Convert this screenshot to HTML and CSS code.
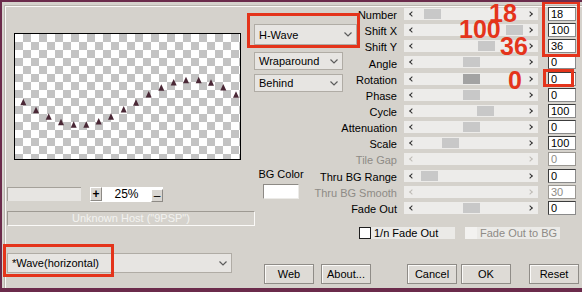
FILE: index.html
```html
<!DOCTYPE html>
<html lang="en">
<head>
    <meta charset="UTF-8">
    <meta name="viewport" content="width=device-width, initial-scale=1.0">
    <title>Wave</title>
    <link rel="stylesheet" href="styles.css">
</head>
<body>
<div class="window">
    <div class="panel">
        <div class="left">
            <div class="preview">
                <svg width="225" height="125" viewBox="0 0 225 125">
                    <defs>
                        <polygon id="tri" points="0,-4 3,2.5 -3,2.5"/>
                    </defs>
                    <g class="dots">
                        <use href="#tri" x="8.3" y="68.7"/>
                        <use href="#tri" x="21" y="76.7"/>
                        <use href="#tri" x="33.7" y="83.3"/>
                        <use href="#tri" x="46" y="88.7"/>
                        <use href="#tri" x="58.7" y="91.3"/>
                        <use href="#tri" x="71.3" y="91.3"/>
                        <use href="#tri" x="83.7" y="88"/>
                        <use href="#tri" x="96" y="83.3"/>
                        <use href="#tri" x="108.7" y="76"/>
                        <use href="#tri" x="121" y="69.3"/>
                        <use href="#tri" x="133.7" y="61"/>
                        <use href="#tri" x="146.3" y="54.3"/>
                        <use href="#tri" x="158.7" y="49"/>
                        <use href="#tri" x="171" y="46.7"/>
                        <use href="#tri" x="183.7" y="46.7"/>
                        <use href="#tri" x="196" y="49.3"/>
                        <use href="#tri" x="208.3" y="54"/>
                        <use href="#tri" x="221" y="61.3"/>
                    </g>
                </svg>
            </div>
            <div class="zoombar">
                <div class="field"></div>
                <div class="zoom">
                    <span class="zbtn">+</span>
                    <span class="zval">25%</span>
                    <span class="zbtn minus">&ndash;</span>
                </div>
            </div>
            <div class="host">Unknown Host ("9PSP")</div>
            <div class="combo wave mark">
                <span>*Wave(horizontal)</span>
                <svg class="chev" width="8" height="5" viewBox="0 0 8 5"><polyline points="0.5,0.5 4,4 7.5,0.5"/></svg>
            </div>
        </div>

        <div class="right">
            <div class="top">
                <div class="side">
                    <div class="combo hwave mark">
                        <span>H-Wave</span>
                        <svg class="chev" width="8" height="5" viewBox="0 0 8 5"><polyline points="0.5,0.5 4,4 7.5,0.5"/></svg>
                    </div>
                    <div class="combo small">
                        <span>Wraparound</span>
                        <svg class="chev" width="8" height="5" viewBox="0 0 8 5"><polyline points="0.5,0.5 4,4 7.5,0.5"/></svg>
                    </div>
                    <div class="combo small">
                        <span>Behind</span>
                        <svg class="chev" width="8" height="5" viewBox="0 0 8 5"><polyline points="0.5,0.5 4,4 7.5,0.5"/></svg>
                    </div>
                    <div class="bgcolor">
                        <span>BG Color</span>
                        <div class="swatch"></div>
                    </div>
                </div>

                <div class="params">
                    <div class="name">Number</div>
                    <div class="bar"><i class="thumb" style="left:20px"></i></div>
                    <div class="val">18</div>

                    <div class="name">Shift X</div>
                    <div class="bar"><i class="thumb" style="left:102px"></i></div>
                    <div class="val">100</div>

                    <div class="name">Shift Y</div>
                    <div class="bar"><i class="thumb" style="left:74px"></i></div>
                    <div class="val">36</div>

                    <div class="name">Angle</div>
                    <div class="bar"><i class="thumb" style="left:59px"></i></div>
                    <div class="val">0</div>

                    <div class="name">Rotation</div>
                    <div class="bar"><i class="thumb focus" style="left:59px"></i></div>
                    <div class="val">0</div>

                    <div class="name">Phase</div>
                    <div class="bar"><i class="thumb" style="left:59px"></i></div>
                    <div class="val">0</div>

                    <div class="name">Cycle</div>
                    <div class="bar"><i class="thumb" style="left:73px"></i></div>
                    <div class="val">100</div>

                    <div class="name">Attenuation</div>
                    <div class="bar"><i class="thumb" style="left:59px"></i></div>
                    <div class="val">0</div>

                    <div class="name">Scale</div>
                    <div class="bar"><i class="thumb" style="left:38px"></i></div>
                    <div class="val">100</div>

                    <div class="name off">Tile Gap</div>
                    <div class="bar off"></div>
                    <div class="val off">0</div>

                    <div class="name">Thru BG Range</div>
                    <div class="bar"><i class="thumb" style="left:17px"></i></div>
                    <div class="val">0</div>

                    <div class="name off">Thru BG Smooth</div>
                    <div class="bar off"></div>
                    <div class="val off">30</div>

                    <div class="name">Fade Out</div>
                    <div class="bar"><i class="thumb" style="left:59px"></i></div>
                    <div class="val">0</div>
                </div>
            </div>

            <div class="checks">
                <div class="check">
                    <span class="tick"></span>
                    <span class="text">1/n Fade Out</span>
                </div>
                <div class="check off">
                    <span class="tick"></span>
                    <span class="text">Fade Out to BG</span>
                </div>
            </div>

            <div class="buttons">
                <button class="btn">Web</button>
                <button class="btn about">About...</button>
                <button class="btn cancel">Cancel</button>
                <button class="btn ok">OK</button>
                <button class="btn reset">Reset</button>
            </div>
        </div>
    </div>

    <!-- red annotations drawn over the dialog -->
    <div class="redbox inputs"></div>
    <div class="redbox rot"></div>
    <span class="note n18">18</span>
    <span class="note n100">100</span>
    <span class="note n36">36</span>
    <span class="note n0">0</span>
</div>
</body>
</html>
```

FILE: styles.css
```css
body{
    margin: 0;
    background: #d5d2cc;
    font-family: "Liberation Sans", Arial, sans-serif;
    font-size: 11px;
    color: #000;
}
.window{
    position: relative;
    width: 582px;
    height: 292px;
    box-sizing: border-box;
    border-top: 2px solid #6b2b4b;
    border-left: 2px solid #6b2b4b;
    border-bottom: 4px solid #6b2b4b;
    overflow: hidden;
}
.panel{
    display: flex;
    box-sizing: border-box;
    height: 283px;
    margin: 3px 0 0 2px;
    padding: 1px 0 0 2px;
    border-top: 1px solid #b9b5ae;
    border-left: 1px solid #b9b5ae;
    box-shadow: inset 1px 1px #fbfaf8;
}

/* left side */
.left{
    width: 247px;
    display: flex;
    flex-direction: column;
    align-items: flex-start;
}
.preview{
    margin: 26px 0 0 7px;
    width: 227px;
    height: 127px;
    box-sizing: border-box;
    border: 1px solid #000;
    background: repeating-conic-gradient(#c3c3c3 0 25%, #fff 0 50%) 0 0 / 16px 16px;
}
.preview svg{
    display: block;
}
.dots{
    fill: #4a2836;
}
.zoombar{
    display: flex;
    gap: 9px;
    margin-top: 27px;
}
.field{
    width: 74px;
    height: 14px;
    box-sizing: border-box;
    border-top: 1px solid #a5a19a;
    border-left: 1px solid #a5a19a;
    background: #e7e5e2;
}
.zoom{
    display: flex;
    align-items: flex-start;
    width: 73px;
    height: 15px;
    background: #fff;
}
.zbtn{
    width: 12px;
    height: 14px;
    box-sizing: border-box;
    border: 1px solid #fff;
    border-right-color: #8d8a85;
    border-bottom-color: #8d8a85;
    background: #d9d6d1;
    display: flex;
    align-items: center;
    justify-content: center;
    font-weight: bold;
    font-size: 12px;
    line-height: 1;
}
.zbtn.minus{
    margin-top: 2px;
    height: 13px;
    font-weight: normal;
}
.zval{
    flex: 1;
    text-align: center;
    line-height: 14px;
    font-size: 12px;
}
.host{
    margin-top: 9px;
    width: 248px;
    height: 15px;
    box-sizing: border-box;
    border-top: 1px solid #9e9a93;
    border-left: 1px solid #9e9a93;
    border-bottom: 1px solid #fbfaf8;
    border-right: 1px solid #fbfaf8;
    color: #f3f2f0;
    text-align: center;
    line-height: 13px;
}

/* combos */
.combo{
    position: relative;
    display: flex;
    align-items: center;
    justify-content: space-between;
    box-sizing: border-box;
    padding: 0 4px;
    border: 1px solid #b0aca5;
    background: #e7e5e2;
}
.chev{
    fill: none;
    stroke: #5c5c5c;
    stroke-width: 1.2;
}
.wave{
    margin-top: 27px;
    width: 225px;
    height: 20px;
    padding-left: 4px;
}
.hwave{
    margin-top: 17px;
    width: 103px;
    height: 21px;
}
.small{
    width: 89px;
    height: 18px;
    margin-top: 4px;
}
.hwave + .small{
    margin-top: 7px;
}
.mark::after{
    content: "";
    position: absolute;
    box-sizing: border-box;
    border: 3px solid #e4341b;
}
.hwave::after{
    top: -12px;
    left: -8px;
    right: -4px;
    bottom: -4px;
}
.wave::after{
    top: -10px;
    left: -5px;
    width: 111px;
    bottom: -5px;
}

/* right side */
.right{
    display: flex;
    flex-direction: column;
}
.top{
    display: flex;
    align-items: flex-start;
}
.side{
    width: 103px;
    display: flex;
    flex-direction: column;
    align-items: flex-start;
}
.bgcolor{
    display: flex;
    flex-direction: column;
    align-items: center;
    gap: 4px;
    width: 44px;
    margin: 76px 0 0 5px;
}
.bgcolor span{
    line-height: 12px;
    white-space: nowrap;
}
.swatch{
    width: 36px;
    height: 15px;
    box-sizing: border-box;
    background: #fff;
    border: 1px solid #8d8a85;
    border-right-color: #ecebe8;
    border-bottom-color: #ecebe8;
}

.params{
    display: grid;
    grid-template-columns: 47px 144px 28px;
    grid-auto-rows: 16.17px;
}
.name{
    display: flex;
    justify-content: flex-end;
    align-items: center;
    padding-right: 7px;
    white-space: nowrap;
}
.name.off{
    color: #8e8b86;
}
.bar{
    position: relative;
    align-self: start;
    display: flex;
    justify-content: space-between;
    align-items: center;
    width: 134px;
    height: 12px;
    margin-top: 1px;
    padding: 0 6px;
    box-sizing: border-box;
    background: #edecea;
}
.bar::before,
.bar::after{
    content: "";
    width: 3px;
    height: 3px;
    border: 0 solid #303030;
    transform: rotate(45deg);
}
.bar::before{
    border-left-width: 1.6px;
    border-bottom-width: 1.6px;
}
.bar::after{
    border-right-width: 1.6px;
    border-top-width: 1.6px;
}
.bar.off::before,
.bar.off::after{
    border-color: #bdbab5;
}
.thumb{
    position: absolute;
    top: 1px;
    width: 17px;
    height: 10px;
    background: #c8c8c8;
}
.thumb.focus{
    background: #a3a3a3;
}
.val{
    align-self: start;
    height: 14px;
    box-sizing: border-box;
    padding-left: 2px;
    border: 1px solid #3c3c3c;
    border-right-color: #8a8a8a;
    border-bottom-color: #8a8a8a;
    background: #fff;
    line-height: 12px;
}
.val.off{
    color: #8e8b86;
    border-color: #9a9792;
}

.checks{
    display: flex;
    gap: 10px;
    margin: 10px 0 0 105px;
}
.check{
    display: flex;
    width: 96px;
    height: 12px;
}
.tick{
    width: 12px;
    height: 12px;
    box-sizing: border-box;
    border: 1px solid #1e1e1e;
    background: #fff;
}
.check .text{
    flex: 1;
    padding-left: 3px;
    background: #ebeae7;
    line-height: 12px;
    white-space: nowrap;
}
.check.off{
    width: 95px;
}
.check.off .tick{
    border-color: #f3f2f0;
    background: #f3f2f0;
}
.check.off .text{
    color: #8e8b86;
}

.buttons{
    display: flex;
    margin: 25px 0 0 10px;
}
.btn{
    width: 50px;
    height: 20px;
    padding: 0;
    box-sizing: border-box;
    border: 1px solid #8f8c87;
    box-shadow: inset 1px 1px #fbfaf8;
    background: #dedbd6;
    font-family: inherit;
    font-size: 11px;
    color: #000;
}
.about{ margin-left: 7px; }
.cancel{ margin-left: 36px; }
.ok{ margin-left: 4px; }
.reset{ margin-left: 18px; }

/* annotations */
.redbox{
    position: absolute;
    box-sizing: border-box;
    border: 3px solid #e4341b;
}
.redbox.inputs{
    left: 540px;
    top: -1px;
    width: 38px;
    height: 56px;
}
.redbox.rot{
    left: 541px;
    top: 67px;
    width: 31px;
    height: 18px;
}
.note{
    position: absolute;
    color: #e4341b;
    font-size: 25px;
    font-weight: bold;
    line-height: 25px;
}
.n18{ left: 487px; top: -1px; }
.n100{ left: 457px; top: 15px; }
.n36{ left: 498px; top: 32px; }
.n0{ left: 506px; top: 66px; }
```
